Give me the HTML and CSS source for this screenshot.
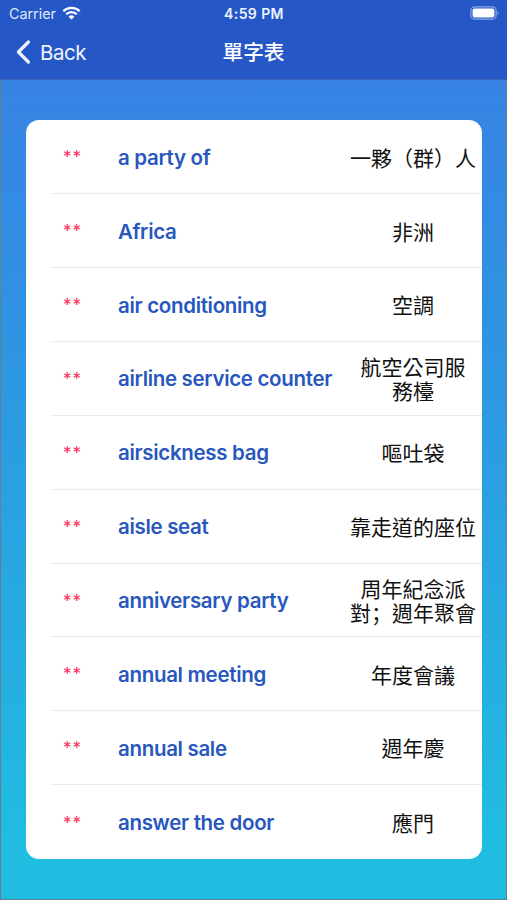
FILE: index.html
```html
<!DOCTYPE html>
<html lang="zh-Hant">
  <head>
    <meta charset="UTF-8" />
    <meta name="viewport" content="width=device-width, initial-scale=1.0" />
    <title>單字表</title>
    <link rel="stylesheet" href="styles.css">
  </head>
  <body>
    <header>
      <div class="status-bar">
        <div class="carrier">
          <span>Carrier</span>
          <svg class="wifi" width="19" height="14" viewBox="0 0 19 14">
            <path d="M1.3 5.2 A11.7 11.7 0 0 1 17.7 5.2" />
            <path d="M4.2 8.3 A7.5 7.5 0 0 1 14.8 8.3" />
            <path class="dot" d="M9.5 13.6 L6.5 10.7 A4.3 4.3 0 0 1 12.5 10.7 Z" />
          </svg>
        </div>
        <div class="time">4:59 PM</div>
        <svg class="battery" width="31" height="14" viewBox="0 0 31 14">
          <rect class="shell" x="0.9" y="0.8" width="25.2" height="12.4" rx="3.8" />
          <rect class="level" x="2.6" y="2.6" width="21.8" height="8.8" rx="2" />
          <path class="cap" d="M27.6 4.8 Q30 7 27.6 9.2 Z" />
        </svg>
      </div>
      <nav class="nav-bar">
        <a class="back">
          <svg width="16" height="26" viewBox="0 0 16 26">
            <path d="M13.4 3 L3.4 13 L13.4 23" />
          </svg>
          <span>Back</span>
        </a>
        <h1>單字表</h1>
      </nav>
    </header>

    <main>
      <ul class="word-list">
        <li><span class="stars">**</span><span class="word">a party of</span><span class="meaning">一夥（群）人</span></li>
        <li><span class="stars">**</span><span class="word">Africa</span><span class="meaning">非洲</span></li>
        <li><span class="stars">**</span><span class="word">air conditioning</span><span class="meaning">空調</span></li>
        <li><span class="stars">**</span><span class="word">airline service counter</span><span class="meaning">航空公司服<br>務檯</span></li>
        <li><span class="stars">**</span><span class="word">airsickness bag</span><span class="meaning">嘔吐袋</span></li>
        <li><span class="stars">**</span><span class="word">aisle seat</span><span class="meaning">靠走道的座位</span></li>
        <li><span class="stars">**</span><span class="word">anniversary party</span><span class="meaning">周年紀念派<br>對<span lang="zh-Hans" class="mark">；</span>週年聚會</span></li>
        <li><span class="stars">**</span><span class="word">annual meeting</span><span class="meaning">年度會議</span></li>
        <li><span class="stars">**</span><span class="word">annual sale</span><span class="meaning">週年慶</span></li>
        <li><span class="stars">**</span><span class="word">answer the door</span><span class="meaning">應門</span></li>
      </ul>
    </main>
  </body>
</html>
```
FILE: styles.css
```css
* {
  box-sizing: border-box;
}

body {
  margin: 0;
  height: 900px;
  overflow: hidden;
  display: flex;
  flex-direction: column;
  font-family: Inter, "Noto Sans CJK TC", sans-serif;
}

header {
  height: 80px;
  background-color: #2558c6;
  border-bottom: 1px solid #3e66ae;
  color: #ffffff;
}

.status-bar {
  display: grid;
  grid-template-columns: 1fr auto 1fr;
  align-items: center;
  height: 26px;
  padding: 0 6px 0 9px;
}

.carrier {
  display: flex;
  align-items: center;
  gap: 6px;
  font-size: 14.3px;
  color: #dfe8fa;
}

.wifi path {
  fill: none;
  stroke: #ffffff;
  stroke-width: 2.3;
}

.wifi .dot {
  fill: #ffffff;
  stroke: none;
}

.time {
  font-size: 14px;
  font-weight: 600;
  letter-spacing: 0.4px;
  margin-left: -2px;
  color: #eef3ff;
}

.battery {
  justify-self: end;
}

.shell {
  fill: none;
  stroke: #8ba8e6;
  stroke-width: 1.2;
}

.level {
  fill: #ffffff;
}

.cap {
  fill: #8ba8e6;
}

.nav-bar {
  display: grid;
  grid-template-columns: 1fr auto 1fr;
  align-items: center;
  height: 52px;
  padding: 0 15px;
}

.back {
  display: flex;
  align-items: center;
  gap: 9px;
  font-size: 20.5px;
  letter-spacing: -0.5px;
  color: #eef3ff;
}

.back path {
  fill: none;
  stroke: #eef3ff;
  stroke-width: 3.2;
  stroke-linecap: round;
  stroke-linejoin: round;
}

h1 {
  margin: 0;
  padding-top: 2px;
  font-size: 20.7px;
  font-weight: 500;
  line-height: 30px;
}

main {
  flex: 1;
  padding: 40px 24px 0;
  border: 1px solid #64808f;
  border-width: 0 1px 1px;
  background: linear-gradient(#3783e4, #2f93e2 30%, #20bde1 94%);
}

.word-list {
  list-style: none;
  margin: 0 0 0 1px;
  padding: 0.5px 0 0;
  height: 739px;
  display: grid;
  grid-template-rows: repeat(10, 1fr);
  background-color: #ffffff;
  border-radius: 13px;
}

.word-list li {
  display: grid;
  grid-template-columns: 68px 1fr 138px;
  align-items: center;
  margin-left: 24px;
  border-bottom: 1px solid #ececee;
}

.word-list li:last-child {
  border-bottom: 0;
}

.stars {
  padding: 1px 0 0 13px;
  font-size: 17px;
  letter-spacing: 1px;
  color: #f72c57;
}

.word {
  padding-top: 1px;
  font-size: 20.5px;
  font-weight: 600;
  letter-spacing: -0.32px;
  white-space: nowrap;
  color: #2857bd;
}

.meaning {
  font-family: "Noto Sans CJK TC", sans-serif;
  font-size: 21px;
  line-height: 24.5px;
  text-align: center;
  white-space: nowrap;
  color: #111111;
}

.mark {
  font-family: "Noto Sans CJK SC", sans-serif;
}
```
